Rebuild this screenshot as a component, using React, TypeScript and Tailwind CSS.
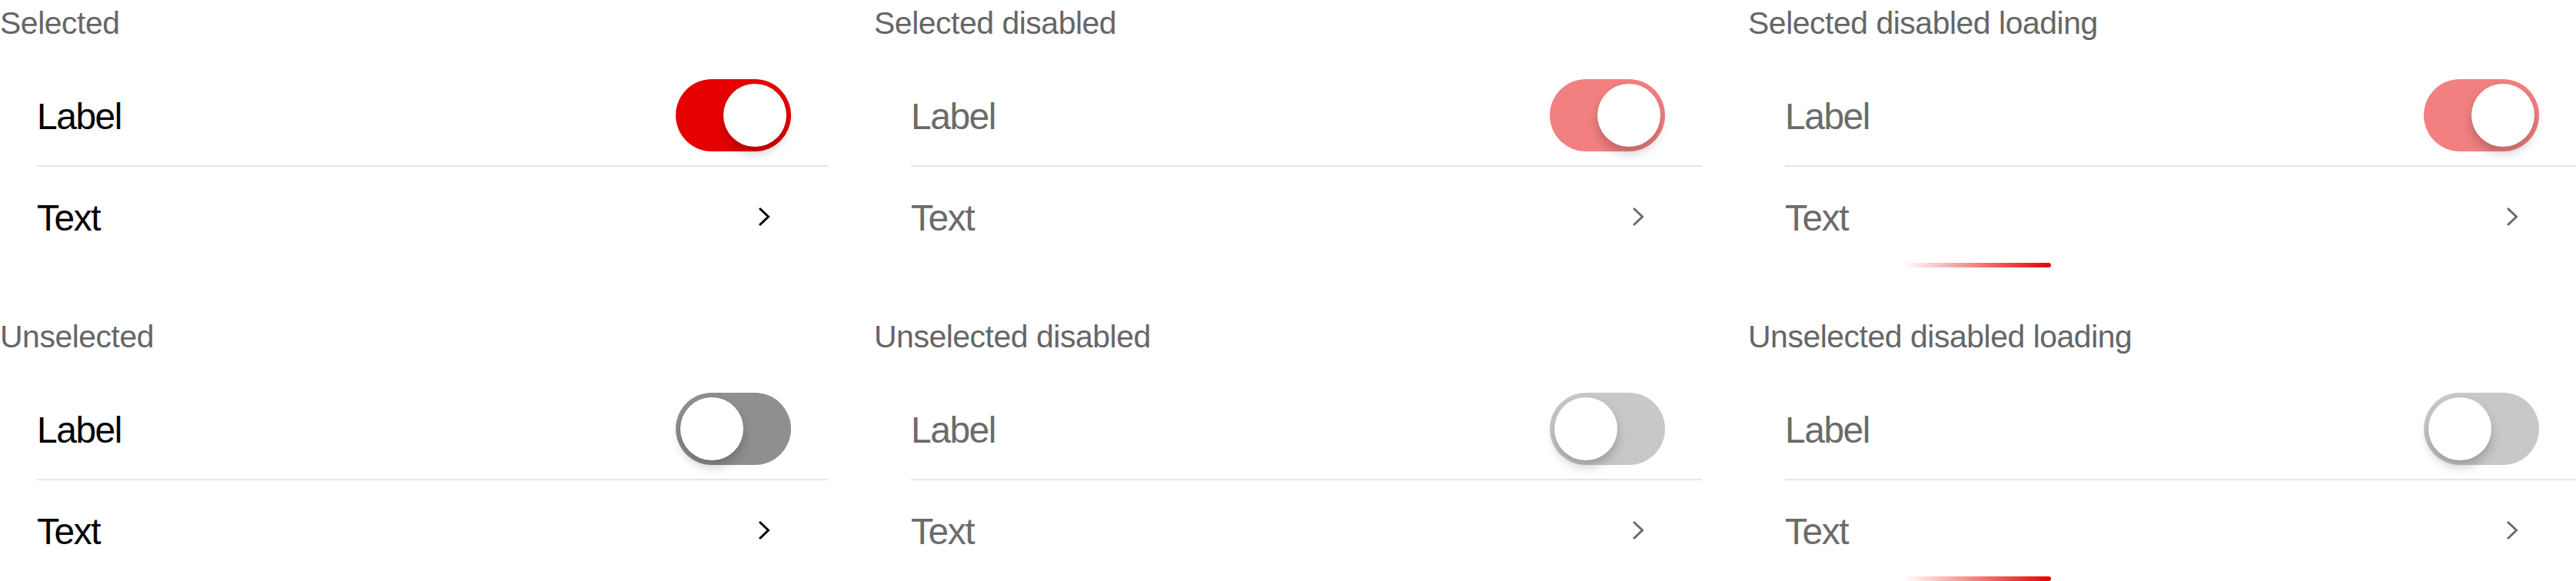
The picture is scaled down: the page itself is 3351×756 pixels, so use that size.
import React from "react";

type Variant = {
  title: string;
  selected: boolean;
  disabled: boolean;
  loading: boolean;
};

const columns: Variant[][] = [
  [
    { title: "Selected", selected: true, disabled: false, loading: false },
    { title: "Unselected", selected: false, disabled: false, loading: false },
  ],
  [
    { title: "Selected disabled", selected: true, disabled: true, loading: false },
    { title: "Unselected disabled", selected: false, disabled: true, loading: false },
  ],
  [
    { title: "Selected disabled loading", selected: true, disabled: true, loading: true },
    { title: "Unselected disabled loading", selected: false, disabled: true, loading: true },
  ],
];

function Toggle({ selected, disabled }: { selected: boolean; disabled: boolean }) {
  const track = selected
    ? disabled
      ? "bg-[#f28080]"
      : "bg-[#e60000]"
    : disabled
    ? "bg-[#c8c8c8]"
    : "bg-[#8f8f8f]";
  return (
    <div
      className={`w-[150px] h-[94px] rounded-full flex items-center px-[6px] ${track} ${
        selected ? "justify-end" : "justify-start"
      }`}
    >
      <div className="w-[82px] h-[82px] rounded-full bg-white shadow-[0_8px_14px_rgba(0,0,0,0.22)]" />
    </div>
  );
}

function Chevron({ disabled }: { disabled: boolean }) {
  return (
    <svg width="16" height="26" viewBox="0 0 16 26" className="block">
      <path
        d="M2 2 L13.5 13 L2 24"
        fill="none"
        stroke={disabled ? "#6b6b6b" : "#000000"}
        strokeWidth="3"
        strokeLinecap="butt"
        strokeLinejoin="miter"
      />
    </svg>
  );
}

function Section({ v }: { v: Variant }) {
  const textColor = v.disabled ? "text-[#6b6b6b]" : "text-black";
  return (
    <div className="h-[408px] shrink-0 flex flex-col">
      <div className="text-[41px] leading-[60px] tracking-[-0.5px] text-[#666666] mb-[25px] whitespace-nowrap">
        {v.title}
      </div>
      <div className="pl-[48px] flex flex-col">
        <div className="h-[130px] flex items-center justify-between pr-[48px]">
          <span className={`mt-[3px] text-[48px] leading-none tracking-[-1.5px] ${textColor}`}>Label</span>
          <Toggle selected={v.selected} disabled={v.disabled} />
        </div>
        <div className="h-[2px] bg-[#e6e6e6]" />
        <div className="h-[125px] pt-[5px] flex items-center justify-between pr-[75px]">
          <span className={`mt-[3px] text-[48px] leading-none tracking-[-1.5px] ${textColor}`}>Text</span>
          <Chevron disabled={v.disabled} />
        </div>
        <div className="h-[6px] pl-[154px]">
          {v.loading && (
            <div className="w-[192px] h-[6px] rounded-r-full bg-gradient-to-r from-[rgba(230,0,0,0)] to-[#e60000]" />
          )}
        </div>
      </div>
    </div>
  );
}

export default function App() {
  return (
    <div
      className="w-[3351px] h-[756px] overflow-hidden bg-white flex gap-[60px] antialiased"
      style={{ fontFamily: '"Liberation Sans", Arial, sans-serif' }}
    >
      {columns.map((col, i) => (
        <div key={i} className="w-[1077px] shrink-0 flex flex-col">
          {col.map((v) => (
            <Section key={v.title} v={v} />
          ))}
        </div>
      ))}
    </div>
  );
}
